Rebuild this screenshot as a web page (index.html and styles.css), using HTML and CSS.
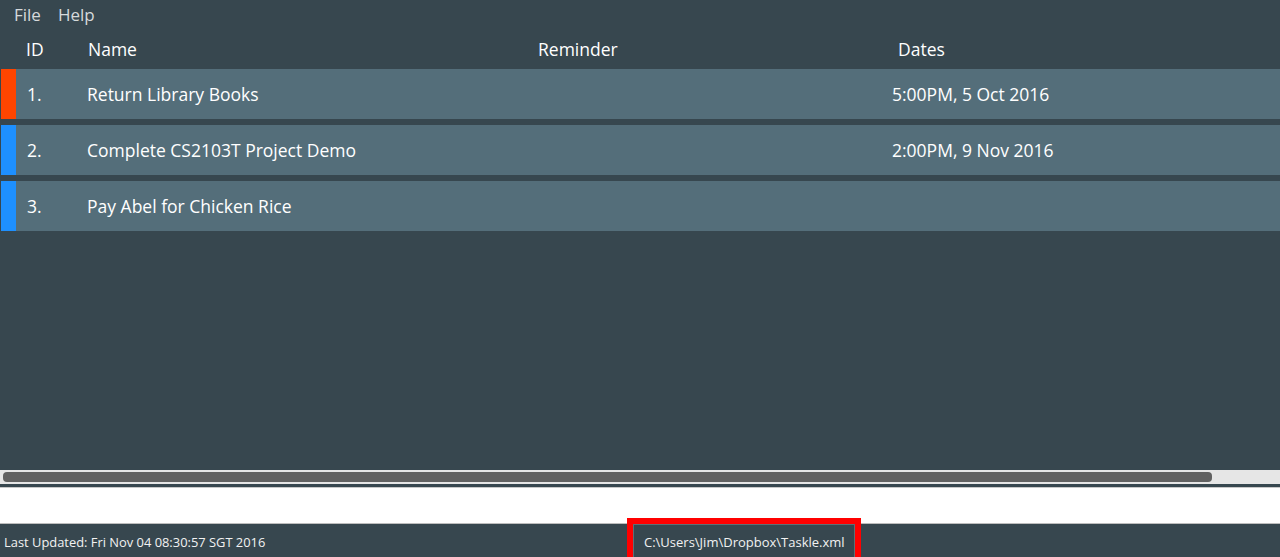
FILE: index.html
```html
<!DOCTYPE html>
<html>
<head>
<meta charset="utf-8">
<link rel="stylesheet" href="styles.css">
</head>
<body>
<div class="app">
  <div class="menubar">
    <span class="menu-item">File</span>
    <span class="menu-item">Help</span>
  </div>
  <div class="header">
    <span class="h-id">ID</span>
    <span class="h-name">Name</span>
    <span class="h-rem">Reminder</span>
    <span class="h-date">Dates</span>
  </div>
  <div class="list">
    <div class="row">
      <div class="stripe orange"></div>
      <span class="c-id">1.</span>
      <span class="c-name">Return Library Books</span>
      <span class="c-rem"></span>
      <span class="c-date">5:00PM, 5 Oct 2016</span>
    </div>
    <div class="row">
      <div class="stripe blue"></div>
      <span class="c-id">2.</span>
      <span class="c-name">Complete CS2103T Project Demo</span>
      <span class="c-rem"></span>
      <span class="c-date">2:00PM, 9 Nov 2016</span>
    </div>
    <div class="row">
      <div class="stripe blue"></div>
      <span class="c-id">3.</span>
      <span class="c-name">Pay Abel for Chicken Rice</span>
      <span class="c-rem"></span>
      <span class="c-date"></span>
    </div>
  </div>
  <div class="filler"></div>
  <div class="hscroll"><div class="thumb"></div></div>
  <div class="command"><input class="cmd-input" type="text"></div>
  <div class="statusbar">
    <span class="updated">Last Updated: Fri Nov 04 08:30:57 SGT 2016</span>
    <div class="path-wrap">
      <span class="path">C:\Users\Jim\Dropbox\Taskle.xml</span>
      <div class="highlight"></div>
    </div>
  </div>
</div>
</body>
</html>
```
FILE: styles.css
```css
html, body {
  margin: 0;
  padding: 0;
  height: 557px;
  overflow: hidden;
  background: #37474f;
  font-family: "Open Sans", "Noto Sans", sans-serif;
  color: #ffffff;
}
.app {
  height: 557px;
  display: flex;
  flex-direction: column;
}
.menubar {
  height: 30px;
  flex: none;
  box-sizing: border-box;
  padding-bottom: 2px;
  display: flex;
  align-items: center;
  padding-left: 14px;
  gap: 17px;
  font-size: 17px;
  color: #d6d9db;
}
.header {
  height: 39px;
  flex: none;
  box-sizing: border-box;
  padding-bottom: 2px;
  display: grid;
  grid-template-columns: 26px 62px 450px 360px 1fr;
  align-items: center;
  font-size: 17.5px;
  color: #ffffff;
}
.h-id { grid-column: 2; }
.list {
  flex: none;
  display: flex;
  flex-direction: column;
  gap: 6px;
}
.row {
  height: 50px;
  margin-left: 1px;
  background: #546e7a;
  display: grid;
  grid-template-columns: 15px 71px 450px 355px 1fr;
  align-items: center;
  font-size: 17.5px;
}
.stripe {
  align-self: stretch;
}
.orange { background: #ff4500; }
.blue { background: #1e90ff; }
.c-id { padding-left: 11px; }
.filler { flex: 1; }
.hscroll {
  flex: none;
  height: 14px;
  background: #e6e6e6;
  display: flex;
  align-items: center;
  padding: 0 3px;
  margin-bottom: 3px;
}
.thumb {
  width: 1209px;
  height: 10px;
  border-radius: 4px;
  background: #616161;
}
.command {
  flex: none;
  height: 37px;
  background: #ffffff;
  border-top: 1px solid #c8c8c8;
  border-bottom: 1px solid #bdbdbd;
  box-sizing: border-box;
}
.cmd-input {
  display: block;
  width: 100%;
  height: 100%;
  border: 0;
  outline: none;
  background: transparent;
  padding: 0;
}
.statusbar {
  flex: none;
  height: 33px;
  display: flex;
  align-items: stretch;
  font-size: 12.9px;
  color: #f2f2f2;
}
.updated {
  width: 633px;
  padding-left: 4px;
  padding-top: 2px;
  box-sizing: border-box;
  display: flex;
  align-items: center;
}
.path-wrap {
  position: relative;
  width: 222px;
  border: 1px solid #5f6f75;
  border-bottom: 0;
  box-sizing: border-box;
  display: flex;
  align-items: center;
  padding-left: 10px;
  padding-top: 1px;
  font-size: 13px;
}
.highlight {
  position: absolute;
  left: -7px;
  right: -7px;
  top: -7px;
  bottom: -10px;
  border: 6px solid #ff0000;
  pointer-events: none;
}
```
